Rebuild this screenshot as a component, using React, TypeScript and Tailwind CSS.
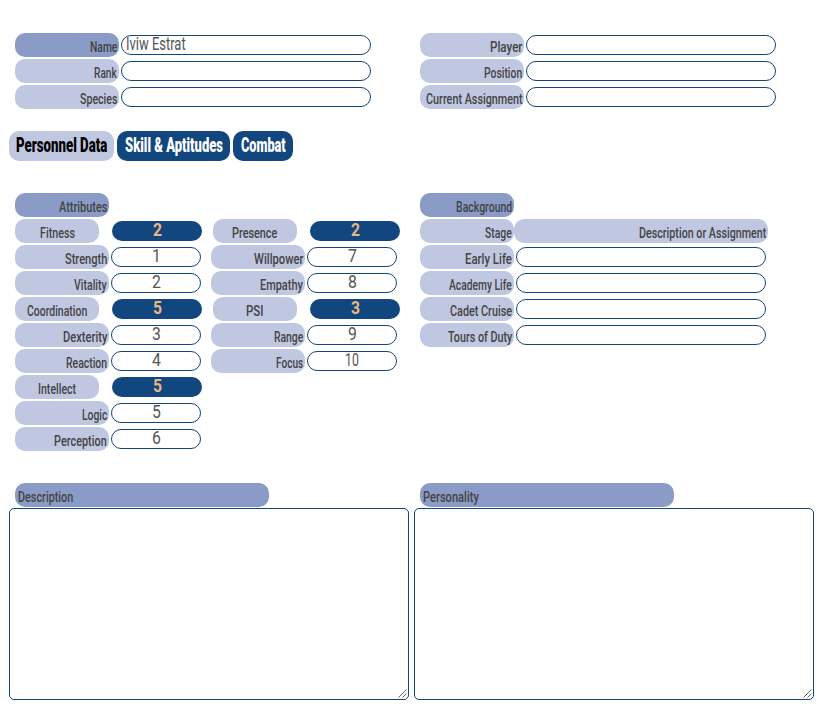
import { useLayoutEffect, useRef, useState } from 'react';
import clsx from 'clsx';

/** Text condensed horizontally to a given width. */
function Fit({ text, w, className }: { text: string; w: number; className?: string }) {
  const ref = useRef<HTMLSpanElement>(null);
  const [scale, setScale] = useState(1);
  useLayoutEffect(() => {
    if (ref.current) setScale(w / ref.current.offsetWidth);
  }, [w, text]);
  return (
    <span className={clsx('block shrink-0 whitespace-nowrap', className)} style={{ width: w }}>
      <span ref={ref} className="inline-block origin-left" style={{ transform: `scaleX(${scale})` }}>
        {text}
      </span>
    </span>
  );
}

function Label({ text, w, className = 'w-[94px] justify-end bg-[#c0c7e1]' }: { text: string; w: number; className?: string }) {
  return (
    <div className={clsx('flex h-6 shrink-0 rounded-[10px] px-0.5 pt-[3px] text-[15px] leading-[22px] font-medium text-[#444]', className)}>
      <Fit text={text} w={w} />
    </div>
  );
}

function Field({ className = 'w-[250px]', text, w = 7 }: { className?: string; text?: string; w?: number }) {
  return (
    <div className={clsx('flex h-5 shrink-0 rounded-[10px] border border-[#11467f] bg-white text-[17.5px] leading-[17px] text-[#555]', className)}>
      {text && <Fit text={text} w={w} />}
    </div>
  );
}

function MainAttr({ name, w, value }: { name: string; w: number; value: string }) {
  return (
    <div className="flex items-center">
      <Label text={name} w={w} className="w-[84px] justify-center bg-[#c0c7e1]" />
      <div className="ml-[13px] flex h-5 w-[90px] justify-center rounded-[10px] bg-[#11467f] pl-px text-[17.5px] leading-[18px] font-bold text-[#e8b883]">
        <Fit text={value} w={9} />
      </div>
    </div>
  );
}

function SubAttr({ name, w, value, vw = 9 }: { name: string; w: number; value: string; vw?: number }) {
  return (
    <div className="flex items-center gap-0.5">
      <Label text={name} w={w} />
      <Field className="w-[90px] justify-center" text={value} w={vw} />
    </div>
  );
}

const head = 'w-[104px] justify-end bg-[#c0c7e1]';

function HeadRow({ name, w, dark, text }: { name: string; w: number; dark?: boolean; text?: string }) {
  return (
    <div className="flex items-center gap-0.5">
      <Label text={name} w={w} className={dark ? 'w-[104px] justify-end bg-[#899bc6]' : head} />
      <Field text={text} w={60} className="w-[250px] pl-1" />
    </div>
  );
}

function Tab({ text, w, className }: { text: string; w: number; className: string }) {
  return (
    <div className={clsx('flex h-[30px] justify-center rounded-[10px] text-[19.5px] leading-[29px] font-black', className)}>
      <Fit text={text} w={w} />
    </div>
  );
}

function Notes({ title, w }: { title: string; w: number }) {
  return (
    <div className="w-[400px]">
      <Label text={title} w={w} className="ml-1.5 w-[254px] bg-[#899bc6] pl-[3px]" />
      <div className="mt-px flex h-48 items-end justify-end rounded-[5px] border border-[#11467f] bg-white p-px">
        <svg width="9" height="9" viewBox="0 0 9 9" stroke="#666" strokeWidth="1" fill="none">
          <path d="M0.5 8.5 8.5 0.5M4.5 8.5 8.5 4.5" />
        </svg>
      </div>
    </div>
  );
}

const stages: [string, number][] = [
  ['Early Life', 47],
  ['Academy Life', 63],
  ['Cadet Cruise', 62],
  ['Tours of Duty', 64.5],
];

export default function App() {
  return (
    <div className="h-[719px] w-[834px] bg-white pt-[33px] font-['Roboto','Liberation_Sans',sans-serif]">
      <div className="flex pl-[15px]">
        <div className="flex w-[405px] flex-col gap-0.5">
          <HeadRow name="Name" w={27.5} dark text="Iviw Estrat" />
          <HeadRow name="Rank" w={23} />
          <HeadRow name="Species" w={37.5} />
        </div>
        <div className="flex flex-col gap-0.5">
          <HeadRow name="Player" w={32.5} />
          <HeadRow name="Position" w={38} />
          <HeadRow name="Current Assignment" w={96.5} />
        </div>
      </div>

      <div className="mt-[22px] flex gap-[3px] pl-[9px]">
        <Tab text="Personnel Data" w={91} className="w-[105px] bg-[#c0c7e1] text-black" />
        <Tab text="Skill & Aptitudes" w={98} className="w-[113px] bg-[#11467f] text-white" />
        <Tab text="Combat" w={45} className="w-[60px] bg-[#11467f] text-white" />
      </div>

      <div className="mt-8 flex h-[290px] pl-[15px]">
        <div className="flex w-[196px] flex-col gap-0.5">
          <Label text="Attributes" w={48} className="w-[94px] justify-end bg-[#899bc6]" />
          <MainAttr name="Fitness" w={35} value="2" />
          <SubAttr name="Strength" w={42} value="1" />
          <SubAttr name="Vitality" w={33} value="2" />
          <MainAttr name="Coordination" w={60} value="5" />
          <SubAttr name="Dexterity" w={44.5} value="3" />
          <SubAttr name="Reaction" w={41} value="4" />
          <MainAttr name="Intellect" w={38} value="5" />
          <SubAttr name="Logic" w={25.5} value="5" />
          <SubAttr name="Perception" w={53} value="6" />
        </div>
        <div className="flex w-[209px] flex-col gap-0.5 pt-[26px]">
          <div className="pl-0.5"><MainAttr name="Presence" w={45.5} value="2" /></div>
          <SubAttr name="Willpower" w={49.5} value="7" />
          <SubAttr name="Empathy" w={43} value="8" />
          <div className="pl-0.5"><MainAttr name="PSI" w={17.5} value="3" /></div>
          <SubAttr name="Range" w={29} value="9" />
          <SubAttr name="Focus" w={27.5} value="10" vw={14} />
        </div>
        <div className="flex flex-col gap-0.5">
          <Label text="Background" w={56} className="w-[94px] justify-end bg-[#899bc6]" />
          <div className="flex">
            <Label text="Stage" w={27} />
            <Label text="Description or Assignment" w={127} className="w-[254px] justify-end bg-[#c0c7e1]" />
          </div>
          {stages.map(([name, w]) => (
            <div key={name} className="flex items-center gap-0.5">
              <Label text={name} w={w} />
              <Field />
            </div>
          ))}
        </div>
      </div>

      <div className="flex gap-[5px] pl-[9px]">
        <Notes title="Description" w={55.5} />
        <Notes title="Personality" w={55.5} />
      </div>
    </div>
  );
}
